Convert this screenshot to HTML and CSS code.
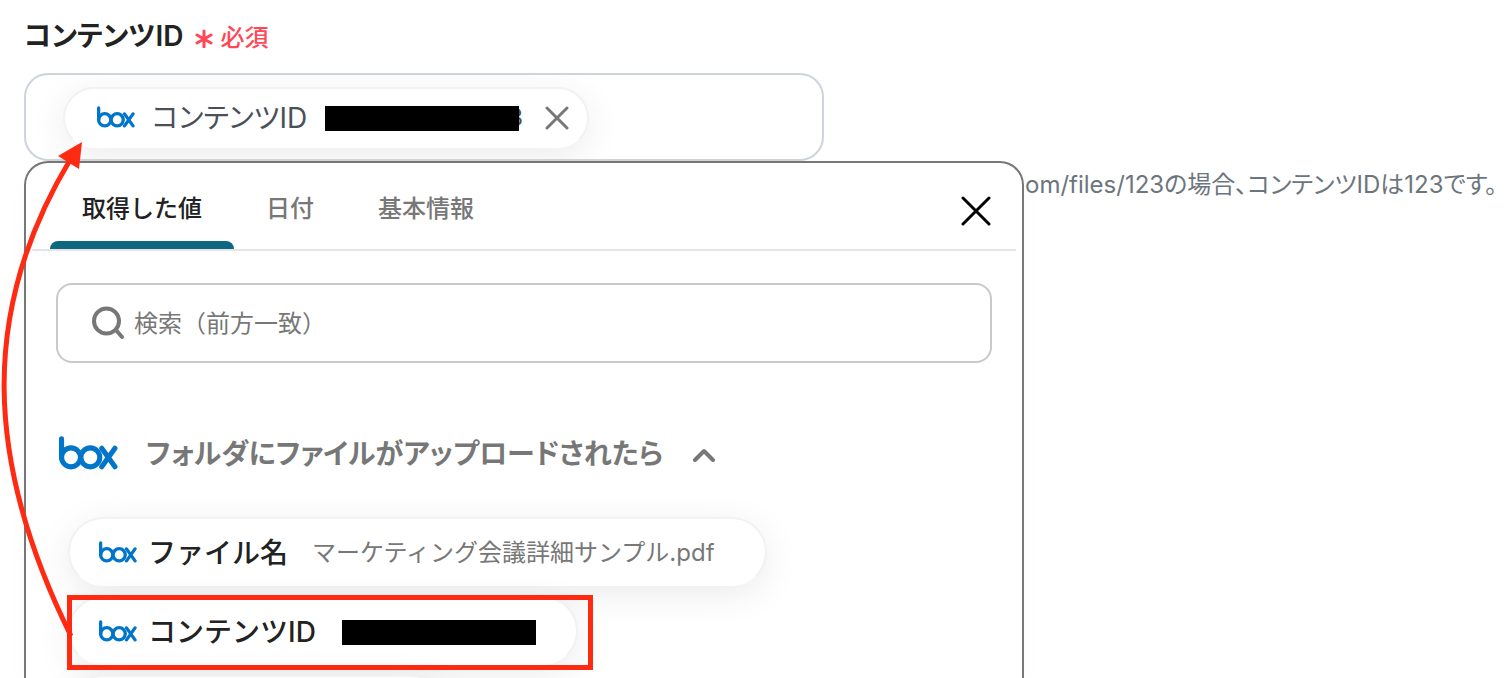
FILE: index.html
```html
<!DOCTYPE html>
<html lang="ja">
<head>
    <meta charset="UTF-8">
    <meta name="viewport" content="width=device-width, initial-scale=1.0">
    <title>コンテンツID</title>
    <link rel="stylesheet" href="styles.css">
</head>
<body>
    <!-- box ロゴ -->
    <svg class="defs" width="0" height="0" aria-hidden="true">
        <symbol id="box-logo" viewBox="0 0 58 33">
            <g fill="none" stroke="#0075c9" stroke-width="5" stroke-linecap="round" stroke-linejoin="round">
                <path d="M2.5 2.5V21"/>
                <circle cx="11.800" cy="20.800" r="9.300"/>
                <circle cx="30.800" cy="20.800" r="9.300"/>
                <path d="M42 11.800L55 30M55 11.800L42 30"/>
            </g>
        </symbol>
    </svg>

    <main class="field">
        <div class="field-label">
            <h1>コンテンツID</h1>
            <span class="required">
                <svg width="18" height="20" viewBox="0 0 18 20" aria-hidden="true"><path d="M9 3V19M2 7L16 15M16 7L2 15"/></svg>
                必須
            </span>
        </div>

        <div class="field-input">
            <div class="chip chip-selected">
                <svg class="logo" aria-hidden="true"><use href="#box-logo"/></svg>
                <span class="chip-text">コンテンツID</span>
                <span class="mask"></span><span class="tail">3</span>
                <button type="button" class="chip-remove" aria-label="削除">
                    <svg width="24" height="24" viewBox="0 0 24 24"><path d="M2 2L22 22M22 2L2 22"/></svg>
                </button>
            </div>
        </div>

        <div class="row">
            <section class="panel">
                <div class="panel-head">
                    <div class="tabs" role="tablist">
                        <button type="button" role="tab" class="tab active" aria-selected="true">取得した値</button>
                        <button type="button" role="tab" class="tab" aria-selected="false">日付</button>
                        <button type="button" role="tab" class="tab" aria-selected="false">基本情報</button>
                    </div>
                    <button type="button" class="panel-close" aria-label="閉じる">
                        <svg width="30" height="30" viewBox="0 0 30 30"><path d="M2 2L28 28M28 2L2 28"/></svg>
                    </button>
                </div>

                <div class="panel-body">
                    <label class="search">
                        <svg width="34" height="34" viewBox="0 0 34 34" aria-hidden="true"><circle cx="14.500" cy="15" r="12.500"/><path d="M24 24L30 31"/></svg>
                        <input type="text" placeholder="検索（前方一致）" aria-label="検索">
                    </label>

                    <button type="button" class="group" aria-expanded="true">
                        <svg class="logo-large" aria-hidden="true"><use href="#box-logo"/></svg>
                        <span>フォルダにファイルがアップロードされたら</span>
                        <svg class="chevron" width="22" height="14" viewBox="0 0 22 14" aria-hidden="true"><path d="M2 12L11 3L20 12"/></svg>
                    </button>

                    <ul class="items">
                        <li>
                            <button type="button" class="chip item">
                                <svg class="logo" aria-hidden="true"><use href="#box-logo"/></svg>
                                <span class="item-name">ファイル名</span>
                                <span class="item-value">マーケティング会議詳細サンプル.pdf</span>
                            </button>
                        </li>
                        <li class="marked">
                            <button type="button" class="chip item item-id">
                                <svg class="logo" aria-hidden="true"><use href="#box-logo"/></svg>
                                <span class="item-name">コンテンツID</span>
                                <span class="mask"></span>
                            </button>
                        </li>
                        <li><div class="chip item item-next"></div></li>
                    </ul>
                </div>
            </section>
            <p class="help">om/files/123の場合、コンテンツIDは123です。</p>
        </div>
    </main>

    <!-- 項目から入力欄への矢印 -->
    <svg class="arrow" width="100" height="678" viewBox="0 0 100 678" aria-hidden="true">
        <path d="M71 636C-16 460 -20 310 70 160" fill="none" stroke="#ff2a12" stroke-width="5"/>
        <path d="M82 142L58 156L79 169Z" fill="#ff2a12"/>
    </svg>
</body>
</html>
```

FILE: styles.css
```css
* {
    box-sizing: border-box;
}
body {
    margin: 0;
    height: 100vh;
    overflow: hidden;
    position: relative;
    background-color: #fff;
    color: #222;
    font-family: Inter, "Noto Sans CJK JP", sans-serif;
    font-size: 24px;
    line-height: 36px;
}
button {
    border: none;
    padding: 0;
    background: none;
    color: inherit;
    font: inherit;
    cursor: pointer;
}
svg {
    display: block;
    flex: none;
}
.defs {
    position: absolute;
}
.field {
    padding: 16px 0 0 24px;
}
.field-label {
    display: flex;
    align-items: center;
    gap: 12px;
    height: 40px;
}
h1 {
    margin: 0;
    font-size: 28px;
    font-weight: 600;
    font-feature-settings: "palt";
}
.required {
    display: flex;
    align-items: center;
    gap: 7px;
    padding-top: 4px;
    color: #ff4757;
    font-weight: 500;
}
.required svg {
    fill: none;
    stroke: #ff4757;
    stroke-width: 3;
    stroke-linecap: round;
}
.field-input {
    max-width: 800px;
    height: 88px;
    margin-top: 17px;
    padding: 12px 37px;
    border: 2px solid #ced4da;
    border-radius: 24px;
    overflow: hidden;
}
.chip {
    display: flex;
    align-items: center;
    width: fit-content;
    border: 2px solid #f2f2f2;
    border-bottom-color: transparent;
    border-radius: 36px;
    background-color: #fff;
    background-clip: padding-box;
    box-shadow: 0 8px 36px rgba(0, 0, 0, 0.08);
}
.chip-selected {
    height: 62px;
    padding: 0 18px 0 32px;
    color: #495057;
}
.logo {
    width: 38px;
    height: 22px;
    margin-bottom: 2px;
}
.chip-text {
    margin: 0 18px 0 17px;
    font-size: 28px;
    font-feature-settings: "palt";
}
.mask {
    position: relative;
    z-index: 1;
    width: 194px;
    height: 25px;
    background-color: #000;
}
.tail {
    margin-left: -11px;
}
.chip-remove {
    margin-left: 22px;
}
.chip-remove svg {
    fill: none;
    stroke: #777;
    stroke-width: 3;
    stroke-linecap: round;
}
.row {
    display: flex;
    align-items: flex-start;
}
.panel {
    flex: 0 1 1000px;
    height: calc(100vh - 161px);
    border: 2px solid #777;
    border-bottom: none;
    border-radius: 24px 24px 0 0;
    background-color: #fff;
    box-shadow: 0 8px 24px rgba(0, 0, 0, 0.02);
    overflow: hidden;
}
.panel-head {
    display: flex;
    align-items: center;
    justify-content: space-between;
    height: 88px;
    margin: 0 6px;
    padding: 0 25px 0 18px;
    border-bottom: 2px solid #e5e5e5;
}
.tabs {
    display: flex;
    align-self: stretch;
}
.tab {
    position: relative;
    padding: 0 32px 0 32px;
    border-top: 6px solid transparent;
    color: #777;
    font-weight: 500;
}
.tab.active {
    color: #222;
}
.tab.active::after {
    content: "";
    position: absolute;
    left: 0;
    right: 0;
    bottom: 0;
    height: 8px;
    border-radius: 8px 8px 0 0;
    background-color: #0e6780;
}
.panel-close {
    margin-top: 10px;
}
.panel-close svg {
    fill: none;
    stroke: #000;
    stroke-width: 3;
    stroke-linecap: round;
}
.panel-body {
    padding: 32px 30px 0;
}
.search {
    display: flex;
    align-items: center;
    gap: 8px;
    height: 80px;
    padding: 0 32px 0 34px;
    border: 2px solid #c9c9c9;
    border-radius: 16px;
}
.search svg {
    fill: none;
    stroke: #777;
    stroke-width: 4;
    stroke-linecap: round;
}
.search input {
    flex: 1;
    min-width: 0;
    padding: 2px 0 0;
    border: none;
    outline: none;
    background: none;
    color: #222;
    font: inherit;
}
.search input::placeholder {
    color: #777;
    opacity: 1;
}
.group {
    display: flex;
    align-items: center;
    margin: 69px 0 0 3px;
    color: #777;
    font-size: 28px;
    font-weight: 700;
    line-height: 40px;
    font-feature-settings: "palt";
}
.group span {
    padding-top: 2px;
}
.logo-large {
    width: 59px;
    height: 34px;
    margin-right: 28px;
}
.chevron {
    margin: 4px 0 0 30px;
    fill: none;
    stroke: #777;
    stroke-width: 4;
    stroke-linecap: round;
    stroke-linejoin: round;
}
.items {
    display: flex;
    flex-direction: column;
    gap: 9px;
    margin: 43px 0 0;
    padding: 0 0 0 12px;
    list-style: none;
}
.items li {
    position: relative;
    width: fit-content;
}
.item {
    height: 70px;
    padding: 2px 50px 0 29px;
}
.item-name {
    margin: 0 24px 0 11px;
    font-size: 28px;
    font-weight: 500;
}
.item-value {
    color: #777;
}
.item-id {
    padding-right: 40px;
}
.item-id .item-name {
    margin-right: 26px;
}
.item-next {
    width: 380px;
}
/* 赤枠 */
.marked::after {
    content: "";
    position: absolute;
    inset: -1px -15px -4px -1px;
    border: 5px solid #ff2a12;
}
.help {
    margin: 6px 0 0 1px;
    color: #6c757d;
    font-size: 24px;
    white-space: nowrap;
    font-feature-settings: "palt";
}
.arrow {
    position: absolute;
    top: 0;
    left: 0;
    pointer-events: none;
}
```
